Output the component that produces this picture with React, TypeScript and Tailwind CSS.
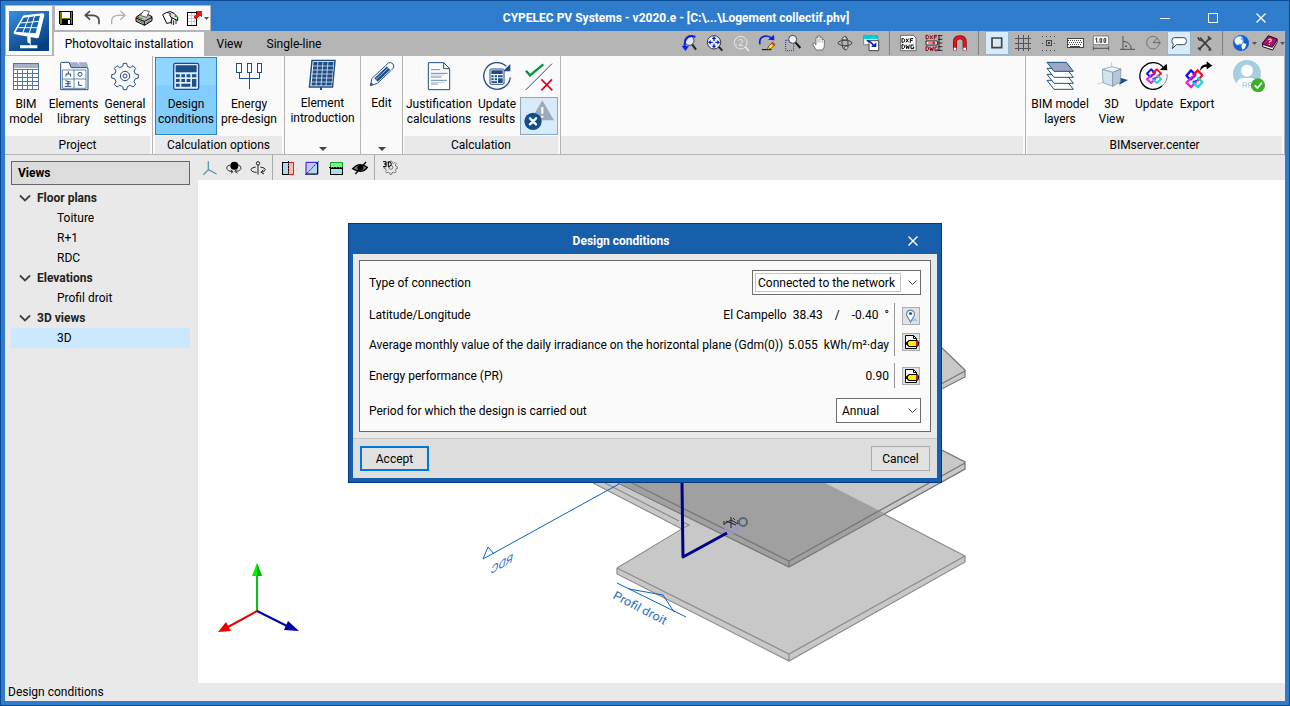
import React from "react";

type GlyphProps = { box: string; w?: number; h?: number; crisp?: boolean; className?: string; children: React.ReactNode };

function Glyph({ box, w = 20, h = 20, crisp, className, children }: GlyphProps) {
  return (
    <svg
      aria-hidden="true"
      viewBox={box}
      width={w}
      height={h}
      shapeRendering={crisp ? "crispEdges" : undefined}
      className={`block shrink-0 ${className ?? ""}`}
      fill="none"
    >
      {children}
    </svg>
  );
}

const NAVY = "#1f4e86";

/* ---------- Quick access ---------- */

const quickIcons: { name: string; icon: React.ReactNode }[] = [
  {
    name: "Save",
    icon: (
      <Glyph box="168 24 60 60" crisp>
        <path d="M177 33h42v42h-39l-3-3z" fill="#000" />
        <path d="M180 36h6v18h-6zM213 36h3v33h-3z" fill="#7f7f00" />
        <path d="M180 54h36v18h-36z" fill="#7f7f00" />
        <path d="M186 36h24v18h-24z" fill="#fff" />
        <path d="M186 57h27v18h-27z" fill="#000" />
        <path d="M204 60h6v12h-6z" fill="#fff" />
      </Glyph>
    ),
  },
  {
    name: "Undo",
    icon: (
      <Glyph box="246 24 60 60">
        <path d="M270 33L256 46L270 59M257 46H280Q297 48 297 62V73" stroke="#4a4a4a" strokeWidth="5" />
      </Glyph>
    ),
  },
  {
    name: "Redo",
    icon: (
      <Glyph box="324 24 60 60">
        <path d="M361 33L375 46L361 59M374 46H352Q335 48 335 62V73" stroke="#b0b0b0" strokeWidth="4" />
      </Glyph>
    ),
  },
  {
    name: "Print",
    icon: (
      <Glyph box="402 24 60 60">
        <path d="M408 52L430 36L456 50V62L434 76L408 64Z" fill="#b9b9b9" stroke="#000" strokeWidth="3" />
        <path d="M421 46L432 31L448 34L440 52Z" fill="#fff" stroke="#222" strokeWidth="2" />
        <path d="M408 54L433 64L456 52M433 64V75" stroke="#000" strokeWidth="3" />
        <path d="M412 60L430 68M438 70L452 61" stroke="#666" strokeWidth="3" />
        <path d="M420 54h6v5h-6z" fill="#00c000" />
        <path d="M413 50h5v4h-5z" fill="#e00000" />
      </Glyph>
    ),
  },
  {
    name: "Plot",
    icon: (
      <Glyph box="480 24 60 60">
        <path d="M488 44L500 37L520 42L512 68L500 70Z" fill="#fff" stroke="#000" strokeWidth="3" />
        <path d="M502 37Q510 31 522 40L533 52V62L513 52Q506 44 512 40" fill="#e4e4e4" stroke="#000" strokeWidth="3" />
        <path d="M515 58V73M521 61V75M528 60V72" stroke="#222" strokeWidth="3" />
        <path d="M524 47h6v4h-6z" fill="#00b000" />
      </Glyph>
    ),
  },
  {
    name: "Export list",
    icon: (
      <Glyph box="558 24 60 60" crisp>
        <path d="M563 36h27v39h-27z" fill="#fff" stroke="#000" strokeWidth="3" />
        <path d="M564 45h24M564 54h24M564 63h24M573 38v36M582 38v36" stroke="#bbb" strokeWidth="2" />
        <path d="M586 33h20v20l-6-6-12 12-7-7 12-12z" fill="#f01010" />
      </Glyph>
    ),
  },
];

/* ---------- Ribbon ---------- */

const BimModel = (
  <Glyph box="30 180 96 96" w={32} h={32} crisp>
    <path d="M40 191h76v77h-76z" fill="#fff" stroke="#5476a3" strokeWidth="3" />
    <path d="M42 193h72v12h-72z" fill="#a5b1cb" />
    <path d="M40 207h76M40 219h76M40 231h76M40 243h76M40 255h76M52 207v60M67 207v60M82 207v60M97 207v60" stroke="#5476a3" strokeWidth="3" />
  </Glyph>
);

const Library = (
  <Glyph box="174 180 96 96" w={32} h={32}>
    <path d="M208 187h24l8 10v9h-28zM236 187h24l4 10v9h-20z" fill="#a2afc9" />
    <path d="M182 269V190q0-3 3-3h22l7 16h46q4 0 4 4v62z" fill="#fff" stroke={NAVY} strokeWidth="3" />
    <path d="M187 210h71v55h-71zM222 210v55M187 237h71" stroke={NAVY} strokeWidth="2" />
    <path d="M205 214v8M198 230v-8h14v8M236 244v12h10M196 242l16 4M204 244v14M196 251h16M194 259h20" stroke={NAVY} strokeWidth="3" />
    <circle cx="240" cy="223" r="6" stroke={NAVY} strokeWidth="3" />
  </Glyph>
);

const gearPath =
  "M370 191h10l2 9 9 4 8-6 8 8-5 8 4 9 9 2v10l-9 2-4 9 5 8-8 8-8-5-9 4-2 9h-10l-2-9-9-4-8 5-8-8 5-8-4-9-9-2v-10l9-2 4-9-5-8 8-8 8 6 9-4z";

const Settings = (
  <Glyph box="327 180 96 96" w={32} h={32}>
    <path d={gearPath} transform="translate(0 -1)" stroke={NAVY} strokeWidth="3" strokeLinejoin="round" />
    <circle cx="375" cy="228" r="14" stroke={NAVY} strokeWidth="3" />
    <circle cx="375" cy="228" r="6" stroke={NAVY} strokeWidth="3" />
  </Glyph>
);

const Calculator = (
  <Glyph box="510 180 96 96" w={32} h={32}>
    <rect x="521" y="190" width="75" height="78" rx="5" fill="#d7ecfb" stroke={NAVY} strokeWidth="4" />
    <path d="M527 196h63v21h-63zM528 223h11v9h-11zM544 223h11v9h-11zM560 223h11v9h-11zM576 223h13v9h-13zM528 237h11v9h-11zM544 237h11v9h-11zM560 237h11v9h-11zM576 237h13v23h-13zM528 251h11v9h-11zM544 251h27v9h-27z" fill={NAVY} />
  </Glyph>
);

const Energy = (
  <Glyph box="699 180 96 96" w={32} h={32} crisp>
    <path d="M710 189h14v27h-14zM741 189h14v27h-14zM771 189h14v27h-14zM717 217v17h61v-17M748 217v50" stroke={NAVY} strokeWidth="3" />
  </Glyph>
);

const Panel = (
  <Glyph box="0 0 32 32" w={32} h={32}>
    <path d="M5 1.500h23l-2.500 26.500h-23z" fill="#fff" stroke={NAVY} strokeWidth="1.500" />
    <path d="M6.500 3h20l-2 23.500h-20z" fill={NAVY} />
    <path d="M5 7h22M5 11h22M4 15h22M4 19h22M4 23h22M11 2l-2 25M16 2l-2 25M21 2l-2 25" stroke="#d9e4f1" strokeWidth=".8" />
    <path d="M14 28v3" stroke={NAVY} strokeWidth="2" />
  </Glyph>
);

const Pencil = (
  <Glyph box="105 30 96 96" w={32} h={32}>
    <path d="M118 110L123 88L172 42Q180 38 186 45Q191 51 187 58L139 103Z" fill="#fff" stroke={NAVY} strokeWidth="3" />
    <path d="M130 88L168 52L178 62L140 98Z" fill={NAVY} />
    <path d="M134 92L172 57M164 48L182 66M123 88L139 103" stroke="#e6eef7" strokeWidth="2" />
    <path d="M117 111L121 101L127 106Z" fill={NAVY} />
  </Glyph>
);

const Doc = (
  <Glyph box="279 30 96 96" w={32} h={32}>
    <path d="M295 38h46l18 18v63h-64zM341 38v18h18" fill="#fff" stroke={NAVY} strokeWidth="3" />
    <path d="M303 59h27M303 70h50M303 81h32M303 91h48M303 102h20" stroke={NAVY} strokeWidth="2" />
    <path d="M303 75h40M303 97h42" stroke="#9fb3cf" strokeWidth="2" />
  </Glyph>
);

const CalcUpdate = (
  <Glyph box="453 30 96 96" w={32} h={32}>
    <path d="M541 82A40 40 0 1 1 529 49" stroke={NAVY} strokeWidth="4" />
    <path d="M519 64h22v-22z" fill={NAVY} />
    <rect x="480" y="57" width="42" height="46" rx="4" fill="#fff" stroke={NAVY} strokeWidth="3" />
    <path d="M484 61h34v11h-34zM484 76h7v6h-7zM494 76h7v6h-7zM504 76h14v6h-14zM484 85h7v6h-7zM494 85h7v6h-7zM504 85h14v14h-14zM484 94h17v5h-17z" fill={NAVY} />
  </Glyph>
);

const CheckCross = (
  <Glyph box="570 30 114 96" w={38} h={32}>
    <path d="M587 120L666 41" stroke={NAVY} strokeWidth="3" />
    <path d="M588 62L600 76L640 43" stroke="#00963c" strokeWidth="7" />
    <path d="M634 88L667 121M666 88L634 121" stroke="#e2001e" strokeWidth="5" />
  </Glyph>
);

const Warning = (
  <Glyph box="570 142 114 114" w={38} h={38}>
    <path d="M637 152L672 212H602Z" fill="#9da9bf" />
    <path d="M637 172V192M637 198V204" stroke="#fff" strokeWidth="6" />
    <circle cx="609" cy="215" r="26" fill="#134f86" />
    <path d="M600 206L618 224M618 206L600 224" stroke="#fff" strokeWidth="7" strokeLinecap="round" />
  </Glyph>
);

const Layers = (
  <Glyph box="222 180 96 96" w={32} h={32}>
    <path d="M231 241h58l21 27h-58z" fill="#fff" stroke={NAVY} strokeWidth="3" />
    <path d="M231 223h58l21 27h-58z" fill="#fff" stroke={NAVY} strokeWidth="3" />
    <path d="M231 205h58l21 27h-58z" fill="#fff" stroke={NAVY} strokeWidth="3" />
    <path d="M231 187h58l21 27h-58z" fill="#9aa9c3" stroke={NAVY} strokeWidth="3" />
  </Glyph>
);

const Cube = (
  <Glyph box="378 180 96 96" w={32} h={32}>
    <path d="M425 186v30M382 252l30-8M448 256l8 2" stroke="#a9b9c6" strokeWidth="2" />
    <path d="M450 233L474 240L448 254Z" fill="#1f4e86" />
    <path d="M397 208L425 200L453 207L428 217Z" fill="#eef4f8" stroke="#6f8da5" strokeWidth="2" />
    <path d="M397 208L428 217V259L399 248Z" fill="#d4e2ec" stroke="#6f8da5" strokeWidth="2" />
    <path d="M428 217L453 207L451 246L428 259Z" fill="#b4c7d6" stroke="#6f8da5" strokeWidth="2" />
  </Glyph>
);

/* Four interlocked loops, one per corner. */
function Knot({ x, y }: { x: number; y: number }) {
  return (
    <g transform={`translate(${x} ${y})`} strokeWidth="6" strokeLinejoin="round">
      <path d="M-10 4L-21 -7L-9 -20L4 -8" stroke="#0a16f0" />
      <path d="M-4 -8L9 -20L21 -8L8 5" stroke="#f0102a" />
      <path d="M5 8L-9 21L-21 10L-7 -3L4 -8" stroke="#f418e8" />
      <path d="M8 -3L21 9L9 21L-5 8" stroke="#12d8e8" />
      <path d="M-10 4L4 -8M-4 8L8 5" stroke="#4b28d8" strokeWidth="4" />
    </g>
  );
}

const ServerUpdate = (
  <Glyph box="504 180 96 96" w={32} h={32}>
    <path d="M576 258A40 40 0 1 1 580 202" stroke="#000" strokeWidth="4" />
    <path d="M591 222Q594 244 576 258" stroke="#888" strokeWidth="3" />
    <path d="M569 210L592 211L590 191Z" fill="#000" />
    <Knot x={552} y={228} />
  </Glyph>
);

const ServerExport = (
  <Glyph box="633 180 96 96" w={32} h={32}>
    <g transform="translate(-94 -50) scale(1.14 1.22)">
      <Knot x={673} y={234} />
    </g>
    <path d="M690 214Q690 193 710 193V184L727 197L710 208V200Q696 200 690 214Z" fill="#000" />
  </Glyph>
);

const Avatar = (
  <Glyph box="786 177 108 108" w={36} h={36}>
    <circle cx="834" cy="222" r="42" fill="#a5cfde" />
    <circle cx="834" cy="212" r="18" fill="#fff" />
    <path d="M803 250Q808 234 824 234H844Q860 234 865 250Q852 264 834 264Q816 264 803 250Z" fill="#fff" />
    <path d="M822 262v-10q0-5 5-5t5 5v10M822 256h10M838 262v-10q0-5 5-5t5 5v10M838 256h10" stroke="#a5cfde" strokeWidth="3" />
    <circle cx="867" cy="256" r="21" fill="#3fae2a" />
    <path d="M857 256L865 264L879 248" stroke="#fff" strokeWidth="5" />
  </Glyph>
);

type Item = { label: string[]; icon: React.ReactNode; width: string; active?: boolean };

function RibbonButton({ item }: { item: Item }) {
  return (
    <button
      type="button"
      className={`flex h-[78px] shrink-0 flex-col items-center border pt-0.5 ${item.width} ${
        item.active ? "border-[#2e86bf] bg-linear-to-b from-[#8fd6ff] from-35% to-[#82cdff] to-35%" : "border-transparent"
      }`}
    >
      <span className="flex h-8 items-center justify-center">{item.icon}</span>
      <span className="mt-[5px] flex flex-col items-center whitespace-nowrap leading-[15px]">
        {item.label.map((line) => (
          <span key={line}>{line}</span>
        ))}
      </span>
    </button>
  );
}

function RibbonGroup({ title, items, className, children }: { title: string; items: Item[]; className?: string; children?: React.ReactNode }) {
  return (
    <section className={`flex shrink-0 flex-col border-r border-[#b4b4b4] ${className ?? ""}`}>
      <div className="flex flex-1 items-start pt-px">
        {items.map((item) => (
          <RibbonButton key={item.label.join(" ")} item={item} />
        ))}
        {children}
      </div>
      <h2 className="mr-0.5 flex h-[18px] items-center justify-center bg-[#e9e9e9]">{title}</h2>
    </section>
  );
}

function CompactGroup({ item, className }: { item: Item; className: string }) {
  return (
    <section className={`flex shrink-0 flex-col items-center justify-between border-r border-[#b4b4b4] ${className}`}>
      <RibbonButton item={item} />
      <Glyph box="0 0 8 5" w={8} h={5} className="mb-0.5">
        <path d="M0 0h8l-4 4z" fill="#444" />
      </Glyph>
    </section>
  );
}

const projectItems: Item[] = [
  { label: ["BIM", "model"], icon: BimModel, width: "w-[42px]" },
  { label: ["Elements", "library"], icon: Library, width: "w-[53px]" },
  { label: ["General", "settings"], icon: Settings, width: "w-[50px]" },
];
const optionItems: Item[] = [
  { label: ["Design", "conditions"], icon: Calculator, width: "w-[62px]", active: true },
  { label: ["Energy", "pre-design"], icon: Energy, width: "w-16" },
];
const calculationItems: Item[] = [
  { label: ["Justification", "calculations"], icon: Doc, width: "w-[70px]" },
  { label: ["Update", "results"], icon: CalcUpdate, width: "w-[46px]" },
];
const serverItems: Item[] = [
  { label: ["BIM model", "layers"], icon: Layers, width: "w-[66px]" },
  { label: ["3D", "View"], icon: Cube, width: "w-[37px]" },
  { label: ["Update"], icon: ServerUpdate, width: "w-12" },
  { label: ["Export"], icon: ServerExport, width: "w-[38px]" },
];

/* ---------- View tools ---------- */

const viewTools: { name: string; icon: React.ReactNode }[] = [
  {
    name: "Previous zoom",
    icon: (
      <Glyph box="27 99 60 60">
        <circle cx="58" cy="122" r="14" fill="#dfe8f4" stroke="#444" strokeWidth="3" />
        <path d="M67 134L78 149" stroke="#222" strokeWidth="6" />
        <path d="M76 111Q58 102 48 118Q42 128 45 142" stroke="#0a20e0" strokeWidth="6" />
        <path d="M35 137L57 139L46 153Z" fill="#0a20e0" />
      </Glyph>
    ),
  },
  {
    name: "Zoom all",
    icon: (
      <Glyph box="105 99 60 60">
        <circle cx="132" cy="127" r="20" fill="#eef3fa" stroke="#333" strokeWidth="3" />
        <path d="M146 140L157 152" stroke="#222" strokeWidth="6" />
        <path d="M132 115v8M132 131v8M120 127h8M136 127h8" stroke="#0a20e0" strokeWidth="4" />
        <path d="M132 109l7 8h-14zM132 145l7-8h-14zM114 127l8-7v14zM150 127l-8-7v14z" fill="#0a20e0" />
      </Glyph>
    ),
  },
  {
    name: "Zoom scale",
    icon: (
      <Glyph box="183 99 60 60">
        <circle cx="212" cy="128" r="19" stroke="#e8e8e8" strokeWidth="3" />
        <path d="M226 141L237 153" stroke="#e8e8e8" strokeWidth="5" />
        <path d="M206 121Q213 115 218 122Q217 129 207 136H219M199 134h3" stroke="#e8e8e8" strokeWidth="3" />
      </Glyph>
    ),
  },
  {
    name: "Redraw",
    icon: (
      <Glyph box="261 99 60 60">
        <path d="M270 133Q266 114 282 109Q296 105 305 116" stroke="#0a20e0" strokeWidth="5" />
        <path d="M294 119L313 121L312 104Z" fill="#0a20e0" />
        <path d="M276 149h28" stroke="#000" strokeWidth="3" />
        <path d="M292 149L296 138L308 127L315 134L303 146Z" fill="#ffe21a" stroke="#222" strokeWidth="2" />
        <path d="M308 127L315 134L311 138L304 131Z" fill="#e03030" />
      </Glyph>
    ),
  },
  {
    name: "Zoom window",
    icon: (
      <Glyph box="339 99 60 60">
        <path d="M347 121h24v31h-24z" stroke="#1a30e0" strokeWidth="3" strokeDasharray="3 3" />
        <circle cx="368" cy="118" r="12" fill="#eef3fa" stroke="#444" strokeWidth="3" />
        <path d="M377 128L391 144" stroke="#111" strokeWidth="6" />
      </Glyph>
    ),
  },
  {
    name: "Pan",
    icon: (
      <Glyph box="417 99 60 60">
        <path d="M438 150L429 133Q428 127 433 129L438 134V113q3-4 6 0v-5q3-4 6 0v4q3-3 6 1v6q3-3 7 1v14Q463 144 458 150Z" fill="#fff" stroke="#444" strokeWidth="2" />
        <path d="M444 115v13M450 112v16M457 117v11" stroke="#888" strokeWidth="2" />
      </Glyph>
    ),
  },
  {
    name: "Orbit",
    icon: (
      <Glyph box="495 99 60 60">
        <ellipse cx="525" cy="129" rx="21" ry="8" stroke="#444" strokeWidth="3" />
        <ellipse cx="525" cy="129" rx="9" ry="20" stroke="#444" strokeWidth="3" />
        <path d="M514 117l12-9 4 12zM536 139l-8 12-6-10z" fill="#ddd" stroke="#444" strokeWidth="2" />
      </Glyph>
    ),
  },
  {
    name: "Window view",
    icon: (
      <Glyph box="573 99 60 60">
        <path d="M581 107h42v27h-42z" fill="#fff" stroke="#555" strokeWidth="2" />
        <path d="M582 107h40v10h-40z" fill="#00cfe0" />
        <path d="M597 122h29v30h-29z" fill="#fff" stroke="#444" strokeWidth="3" />
        <path d="M590 122Q600 122 612 138" stroke="#0a20c0" strokeWidth="5" />
        <path d="M603 141h16v-14z" fill="#0a20c0" />
      </Glyph>
    ),
  },
];

const dxfTools: { name: string; icon: React.ReactNode }[] = [
  {
    name: "DXF-DWG templates",
    icon: (
      <Glyph box="684 99 60 60">
        <path d="M692 106h38l8 8v38h-46z" fill="#fff" stroke="#333" strokeWidth="2" />
        <path d="M696 116v11h4l4-4v-4l-4-3zM708 116l8 11M716 116l-8 11M721 128v-12h9M721 121h7M696 134v12h4l4-4v-4l-4-4zM708 134l2 12 3-7 3 7 2-12M731 135h-8v11h8v-5h-3" stroke="#000" strokeWidth="3" />
      </Glyph>
    ),
  },
  {
    name: "Template layers",
    icon: (
      <Glyph box="762 99 60 60">
        <path d="M768 106v11h4l4-4v-4l-4-3zM780 106l8 11M788 106l-8 11M793 118v-12h8M793 111h7M768 140v12h4l4-4v-4l-4-4zM780 140l2 12 3-7 3 7 2-12M802 141h-7v11h7v-5" stroke="#8c0010" strokeWidth="3" />
        <path d="M804 107h13M804 118h13M804 129h13M804 140h13M804 151h13M807 107v45" stroke="#222" strokeWidth="3" />
        <path d="M768 123h34v12h-34z" fill="#fff" stroke="#222" strokeWidth="3" />
        <path d="M774 129h16" stroke="#e01020" strokeWidth="3" />
        <path d="M788 123l10 6-10 6z" fill="#e01020" />
      </Glyph>
    ),
  },
  {
    name: "Object snaps",
    icon: (
      <Glyph box="840 99 60 60">
        <path d="M855 151V126Q855 112 870 112Q884 112 884 126V151" stroke="#7a0000" strokeWidth="12" />
        <path d="M855 144V126Q855 112 870 112Q884 112 884 126V144" stroke="#e01818" strokeWidth="8" />
        <path d="M851 143h8v7h-8zM880 143h8v7h-8z" fill="#fff" />
      </Glyph>
    ),
  },
];

const G = "#444";
const assistTools: { name: string; icon: React.ReactNode; active?: boolean }[] = [
  { name: "Frame", active: true, icon: <Glyph box="51 99 60 60"><path d="M66 114h29v29h-29z" stroke={G} strokeWidth="5" /></Glyph> },
  { name: "Grid", icon: <Glyph box="129 99 60 60" crisp><path d="M144 105v48M159 105v48M174 105v48M135 114h48M135 129h48M135 144h48" stroke="#555" strokeWidth="3" /></Glyph> },
  {
    name: "Snap to grid",
    icon: (
      <Glyph box="207 99 60 60" crisp>
        <path d="M228 120h17v17h-17z" stroke={G} strokeWidth="3" />
        <path d="M216 109h42M216 150h42M216 129h9M252 129h9" stroke={G} strokeWidth="3" strokeDasharray="3 9" />
        <path d="M235 127h4v4h-4z" fill={G} />
      </Glyph>
    ),
  },
  {
    name: "Keyboard entry",
    icon: (
      <Glyph box="285 99 60 60" crisp>
        <path d="M291 114h48v29h-48z" fill="#fff" stroke={G} strokeWidth="3" />
        <path d="M295 120h42M297 127h40M295 133h42" stroke={G} strokeWidth="3" strokeDasharray="3 3" />
        <path d="M300 139h30" stroke={G} strokeWidth="3" />
      </Glyph>
    ),
  },
  {
    name: "Dimensions",
    icon: (
      <Glyph box="363 99 60 60">
        <path d="M370 108h46v26h-46z" fill="#fff" stroke="#555" strokeWidth="2" />
        <path d="M376 117l4-3v14M384 125v3M390 116h5v11h-5zM402 116h5v11h-5z" stroke="#333" strokeWidth="3" />
        <path d="M370 145h46M370 139v12M416 139v12" stroke="#555" strokeWidth="3" />
      </Glyph>
    ),
  },
  { name: "Ortho", icon: <Glyph box="441 99 60 60"><path d="M450 148h45M459 108v40M459 124Q483 126 484 148" stroke="#555" strokeWidth="3" /><circle cx="468" cy="139" r="3" fill="#555" /></Glyph> },
  { name: "Polar", icon: <Glyph box="519 99 60 60"><circle cx="549" cy="128" r="19" stroke="#777" strokeWidth="3" /><path d="M549 128h23M549 128l14-14" stroke="#666" strokeWidth="3" /></Glyph> },
  { name: "Comments", active: true, icon: <Glyph box="597 99 60 60"><path d="M613 113h28q8 0 8 8v4q0 9-8 9h-22l-12 12 3-14q-4-3-4-8v-3q0-8 7-8z" fill="#fff" stroke={G} strokeWidth="3" /></Glyph> },
  {
    name: "Configuration",
    icon: (
      <Glyph box="675 99 60 60">
        <path d="M690 113L722 148M722 112L687 148" stroke={G} strokeWidth="6" />
        <path d="M685 111q-1 11 11 10M716 108q-3 10 8 9M715 150h9M684 143l8 8" stroke={G} strokeWidth="5" />
      </Glyph>
    ),
  },
];

const helpTools: { name: string; icon: React.ReactNode }[] = [
  {
    name: "Language",
    icon: (
      <Glyph box="783 99 60 60">
        <circle cx="810" cy="129" r="24" fill="#1560d0" />
        <circle cx="804" cy="122" r="14" fill="#6db4f6" />
        <path d="M791 120q8-13 22-10l-5 8 8 5-4 8-8-1-5 6-7-8zM816 129l10 3-4 13-8 4-3-10z" fill="#fff" />
      </Glyph>
    ),
  },
  {
    name: "Help",
    icon: (
      <Glyph box="864 99 60 60">
        <path d="M871 130L889 107L916 117L902 143L873 138Z" fill="#a5107e" stroke="#300024" strokeWidth="3" />
        <path d="M872 133L901 142L915 120V127L902 150L872 140Z" fill="#fff" stroke="#300024" strokeWidth="3" />
        <path d="M889 119q8-4 9 2-1 4-5 4v3M892 132v3" stroke="#ffe600" strokeWidth="4" />
      </Glyph>
    ),
  },
];

function SmallCaret({ className }: { className?: string }) {
  return (
    <Glyph box="0 0 5 3" w={5} h={3} className={className}>
      <path d="M0 0h5l-2.500 3z" fill="#555" />
    </Glyph>
  );
}

function ToolDivider({ className }: { className: string }) {
  return <span className={`h-6 w-px bg-[#808080] ${className}`} />;
}

/* ---------- Scene tools ---------- */

const sceneTools: { name: string; icon: React.ReactNode }[][] = [
  [
    { name: "Isometric", icon: <Glyph box="600 24 60 60"><path d="M625 34V59L610 74M625 59L650 72" stroke="#5f97ac" strokeWidth="4" /></Glyph> },
    {
      name: "Orbit view",
      icon: (
        <Glyph box="672 24 60 60">
          <circle cx="703" cy="47" r="12" fill="#000" />
          <path d="M690 45Q680 47 680 54Q681 63 697 65M714 45Q725 48 723 56Q719 65 706 64" stroke="#333" strokeWidth="3" />
          <path d="M712 57l-8 7 9 6M692 60l7 5-6 5" stroke="#333" strokeWidth="3" />
        </Glyph>
      ),
    },
    {
      name: "Turn view",
      icon: (
        <Glyph box="744 24 60 60">
          <circle cx="774" cy="40" r="5" stroke="#222" strokeWidth="3" />
          <path d="M774 45V74M767 51Q753 53 753 59Q755 67 770 67M781 51Q796 53 796 59Q794 66 783 67M790 59l-7 8 9 5" stroke="#222" strokeWidth="3" />
        </Glyph>
      ),
    },
  ],
  [
    {
      name: "Section X",
      icon: (
        <Glyph box="834 24 60 60" crisp>
          <path d="M847 37h17v35h-17z" fill="#aedbe8" stroke="#000" strokeWidth="3" />
          <path d="M866 37h15v35h-15z" fill="#ffb9b9" stroke="#e81c24" strokeWidth="3" />
          <path d="M865 33v42" stroke="#000" strokeWidth="3" strokeDasharray="5 3" />
        </Glyph>
      ),
    },
    {
      name: "Section Y",
      icon: (
        <Glyph box="906 24 60 60">
          <path d="M918 37h35v35h-35z" fill="#c9c4ff" stroke="#1818e8" strokeWidth="3" />
          <path d="M953 37v35h-35z" fill="#aedbe8" />
          <path d="M953 37v35h-35" stroke="#000" strokeWidth="3" />
          <path d="M916 75L956 34" stroke="#000" strokeWidth="3" strokeDasharray="5 4" />
        </Glyph>
      ),
    },
    {
      name: "Section Z",
      icon: (
        <Glyph box="978 24 60 60" crisp>
          <path d="M990 37h36v15h-36z" fill="#7df58c" stroke="#10a828" strokeWidth="3" />
          <path d="M990 54h36v18h-36z" fill="#aedbe8" stroke="#000" strokeWidth="3" />
          <path d="M987 53h42" stroke="#000" strokeWidth="3" strokeDasharray="5 3" />
        </Glyph>
      ),
    },
    {
      name: "Hide",
      icon: (
        <Glyph box="1050 24 60 60">
          <path d="M1058 56Q1078 34 1102 52Q1086 74 1058 56Z" fill="#777" stroke="#000" strokeWidth="4" />
          <circle cx="1081" cy="53" r="9" fill="#000" />
          <path d="M1066 72L1098 36" stroke="#000" strokeWidth="4" />
        </Glyph>
      ),
    },
  ],
  [
    {
      name: "3D options",
      icon: (
        <Glyph box="1140 24 60 60">
          <g transform="translate(985 -62) scale(.5)">
            <path d={gearPath} stroke="#777" strokeWidth="6" />
            <circle cx="375" cy="228" r="12" stroke="#777" strokeWidth="6" />
          </g>
          <path d="M1149 35h9v7h-6M1158 42v8h-9M1165 35v15h4q10-7 0-15z" stroke="#000" strokeWidth="3" />
        </Glyph>
      ),
    },
  ],
];

/* ---------- Sidebar ---------- */

const tree = [
  { title: "Floor plans", views: ["Toiture", "R+1", "RDC"] },
  { title: "Elevations", views: ["Profil droit"] },
  { title: "3D views", views: ["3D"] },
];

function Sidebar() {
  return (
    <aside className="w-[193px] shrink-0 bg-[#e9e9e9] px-1.5 pt-1.5">
      <div className="mr-0.5">
        <h2 className="flex h-6 items-center border border-[#666] bg-[#dcdcdc] px-1.5 font-bold">Views</h2>
        <ul className="mt-[3px]">
          {tree.map((node) => (
            <li key={node.title}>
              <button type="button" className="flex h-5 w-full items-center gap-1.5 pl-2 font-bold text-[#222]">
                <Glyph box="0 0 12 8" w={12} h={8}>
                  <path d="M1 1.500L6 6.500L11 1.500" stroke="#444" strokeWidth="1.800" />
                </Glyph>
                {node.title}
              </button>
              <ul>
                {node.views.map((view) => (
                  <li key={view}>
                    <button type="button" className={`flex h-5 w-full items-center pl-[46px] ${view === "3D" ? "bg-[#cce8ff]" : ""}`}>
                      {view}
                    </button>
                  </li>
                ))}
              </ul>
            </li>
          ))}
        </ul>
      </div>
    </aside>
  );
}

/* ---------- 3D scene ---------- */

function Scene() {
  return (
    <svg role="img" aria-label="3D view of the building" viewBox="198 180 1087 503" className="block h-full w-full" fill="none">
      <path d="M560 466L682 529L689 526L617 568V574L789 661L965 562V556L780 460Z" fill="#c8c8c8" />
      <path d="M593 483L682 529M605 483L679 521M682 529L689 525L683 522M682 529L617 568M617 568L789 654L965 556L820 481M617 568V574L789 661L965 562V556M789 654V661" stroke="#8c8c8c" strokeWidth="1.200" />
      <path d="M600 473L789 567L965 469V462L930 444Z" fill="#c8c8c8" />
      <path d="M600 473L789 567L884 513L825 483L780 460Z" fill="#a0a0a0" />
      <path d="M618 483L789 567L965 469V462L930 444M632 483L789 561L965 463M789 561V567" stroke="#777" strokeWidth="1.300" />
      <path d="M930 337L942 348L965 370V377L930 395Z" fill="#c8c8c8" />
      <path d="M930 337L942 348L965 370V377L930 395M965 371L930 390" stroke="#777" strokeWidth="1.200" />
      <path d="M724 525L731 521L739 525V531L731 535L724 531Z" fill="#9a9ab8" fillOpacity=".75" />
      <path d="M731 517V528M726 521L736 525M724 524L731 520L738 524M724 521v4M738 520v4M733 518l2 2" stroke="#222" strokeWidth="1" />
      <ellipse cx="743" cy="522" rx="4" ry="4" fill="#9aa3ad" stroke="#5b6672" strokeWidth="2" />
      <path d="M682 483L683 557L727 533" stroke="#00008b" strokeWidth="3" strokeLinejoin="round" />
      <g stroke="#0a62c8" strokeWidth="1">
        <path d="M619 484L483 559L488 547L494 554" />
        <path d="M617 583L686 617M629 589L663 595L674 612" />
      </g>
      <g fill="#2a6fc4" fontSize="13">
        <text transform="matrix(-.87 .5 -.2 .95 512 562)">RDC</text>
        <text transform="matrix(.87 .45 -.45 .8 612 598)">Profil droit</text>
      </g>
      <path d="M257 611V574" stroke="#00c810" strokeWidth="2" />
      <path d="M257 563L262 576H252Z" fill="#00f000" />
      <path d="M257 563L262 576H257Z" fill="#00b410" />
      <path d="M257 611L228 627" stroke="#e80000" strokeWidth="2" />
      <path d="M218 632L226 622L231 631Z" fill="#f00000" />
      <path d="M257 611L289 627" stroke="#0000b0" strokeWidth="2" />
      <path d="M299 631L288 621L284 630Z" fill="#0000a8" />
    </svg>
  );
}

/* ---------- Dialog ---------- */

function Dropdown({ id, value, focused, className }: { id: string; value: string; focused?: boolean; className: string }) {
  return (
    <div className={`relative h-[25px] ${className}`}>
      <select id={id} defaultValue={value} className="h-full w-full appearance-none border border-[#6e6e6e] bg-white pt-px pr-5 pl-[5px] outline-none">
        <option>{value}</option>
      </select>
      {focused && <span className="pointer-events-none absolute top-[3px] right-5 bottom-[3px] left-[3px] border border-[#c4c4c4]" />}
      <Glyph box="0 0 9 6" w={9} h={6} className="pointer-events-none absolute top-2.5 right-1">
        <path d="M.5 .5L4.500 4.500L8.500 .5" stroke="#444" strokeWidth="1" />
      </Glyph>
    </div>
  );
}

function SquareButton({ label, children }: { label: string; children: React.ReactNode }) {
  return (
    <button type="button" aria-label={label} className="flex size-[18px] items-center justify-center border border-[#adadad] bg-[#e1e1e1]">
      {children}
    </button>
  );
}

const Pin = (
  <Glyph box="0 0 16 16" w={16} h={16}>
    <path d="M8 13h7l-3-3" fill="#a9c4de" />
    <path d="M7.500 14L4 8A4 4 0 1 1 11 8Z" fill="#fff" stroke="#5c87b2" strokeWidth="1.200" />
    <circle cx="7.500" cy="5.500" r="1.600" fill="#1f5fa6" />
  </Glyph>
);

const EditPage = (
  <Glyph box="0 0 16 16" w={16} h={16}>
    <path d="M2.500 1.500h8l3 3v10h-11z" fill="#fff" stroke="#000" strokeWidth="1" />
    <path d="M10.500 1.500v3h3" stroke="#000" />
    <path d="M3 9.500L6 6.500H13Q15.500 6.500 15.500 9.500T13 12.500H6Z" fill="#ffee00" stroke="#000" strokeWidth="1.200" />
    <path d="M13 7h1.500q1 2.500 0 5H13z" fill="#e01010" />
    <path d="M2.500 9.500L5 8v3z" fill="#000" />
  </Glyph>
);

function DesignDialog() {
  return (
    <div className="fixed inset-0 flex items-center justify-center">
      <div role="dialog" aria-labelledby="dialog-title" className="flex w-[594px] flex-col border border-[#003a80] bg-[#185fab] px-1 pb-1">
        <div className="flex h-[30px] items-center pt-1 text-white">
          <h1 id="dialog-title" className="flex-1 text-center font-bold">Design conditions</h1>
          <button type="button" aria-label="Close" className="flex w-12 justify-center">
            <Glyph box="0 0 10 10" w={10} h={10}>
              <path d="M.5 .5L9.500 9.500M9.500 .5L.5 9.500" stroke="#fff" strokeWidth="1.400" />
            </Glyph>
          </button>
        </div>
        <div className="bg-[#e9e9e9] p-1.5">
          <div className="flex flex-col border border-[#666] bg-[#fafafa] px-[9px] pt-[9px] pb-2">
            <div className="flex h-[25px] items-center justify-between">
              <label htmlFor="connection">Type of connection</label>
              <Dropdown id="connection" value="Connected to the network" focused className="w-[169px]" />
            </div>
            <div className="mt-2 flex h-[53px]">
              <div className="flex flex-1 flex-col justify-between border-r border-[#999] pr-[5px] pb-px">
                <div className="flex h-6 items-center justify-between">
                  <span>Latitude/Longitude</span>
                  <span className="flex">
                    <span>El Campello</span>
                    <span className="ml-1.5">38.43</span>
                    <span className="mx-3">/</span>
                    <span>-0.40</span>
                    <span className="ml-1.5">°</span>
                  </span>
                </div>
                <div className="flex h-5 items-center justify-between whitespace-nowrap">
                  <span>Average monthly value of the daily irradiance on the horizontal plane (Gdm(0))</span>
                  <span className="flex gap-1.5">
                    <span>5.055</span>
                    <span>kWh/m²·day</span>
                  </span>
                </div>
              </div>
              <div className="ml-[7px] flex w-[19px] flex-col gap-2 pt-1">
                <SquareButton label="Select location">{Pin}</SquareButton>
                <SquareButton label="Edit irradiance">{EditPage}</SquareButton>
              </div>
            </div>
            <div className="mt-[7px] flex h-[25px]">
              <div className="flex flex-1 items-center justify-between border-r border-[#999] pr-[5px]">
                <span>Energy performance (PR)</span>
                <span>0.90</span>
              </div>
              <div className="ml-[7px] flex w-[19px] items-start pt-1">
                <SquareButton label="Edit performance">{EditPage}</SquareButton>
              </div>
            </div>
            <div className="mt-2.5 flex h-[25px] items-center justify-between">
              <label htmlFor="period">Period for which the design is carried out</label>
              <Dropdown id="period" value="Annual" className="w-[85px]" />
            </div>
          </div>
        </div>
        <div className="flex h-10 items-center justify-between border-t border-[#c4c4c4] bg-[#dedede] px-[7px]">
          <button type="button" className="h-[25px] w-[69px] border-2 border-[#0078d7] bg-[#e1e1e1]">Accept</button>
          <button type="button" className="h-[25px] w-[59px] border border-[#adadad] bg-[#e1e1e1]">Cancel</button>
        </div>
      </div>
    </div>
  );
}

/* ---------- Header ---------- */

function Header() {
  return (
    <header className="flex h-[51px] shrink-0">
      <button type="button" aria-label="Application menu" className="flex w-[49px] items-center justify-center border border-r-2 border-[#b4b4b4] bg-[#fafafa]">
        <Glyph box="27 30 120 120" w={40} h={40}>
          <defs>
            <linearGradient id="logo" x1="0" y1="0" x2="0.6" y2="1">
              <stop offset="0" stopColor="#3a8ee0" />
              <stop offset="1" stopColor="#073f80" />
            </linearGradient>
          </defs>
          <path d="M27 30h120v120h-120z" fill="url(#logo)" />
          <path d="M82 106V124L90 128V133H60V142H112V133H92V108Z" fill="#fff" />
          <path d="M67 48Q68 44 73 43L127 37Q134 37 133 43L117 108Q116 112 110 112L45 100Q40 98 41 93Z" fill="#fff" />
          <path d="M71 50L120 44L107 97L47 92Z" fill="#1763ad" />
          <path d="M87 47L68 96M104 45L87 98M62 66L117 61M55 80L112 80" stroke="#fff" strokeWidth="3" />
        </Glyph>
      </button>
      <div className="flex min-w-0 flex-1 flex-col">
        <div className="flex h-[26px] items-center">
          <div className="flex h-full w-[157px] items-center gap-1.5 border border-[#b4b4b4] bg-[#fafafa] pl-px">
            {quickIcons.map((tool) => (
              <button key={tool.name} type="button" aria-label={tool.name} className="shrink-0">
                {tool.icon}
              </button>
            ))}
            <SmallCaret className="-ml-2" />
          </div>
          <div className="flex-1 text-center font-bold whitespace-nowrap text-white">
            CYPELEC PV Systems - v2020.e - [C:\...\Logement collectif.phv]
          </div>
          <div className="flex">
            <button type="button" aria-label="Minimize" className="flex w-12 justify-center">
              <Glyph box="0 0 10 10" w={10} h={10} crisp><path d="M0 5.500h10" stroke="#fff" /></Glyph>
            </button>
            <button type="button" aria-label="Maximize" className="flex w-12 justify-center">
              <Glyph box="0 0 10 10" w={10} h={10} crisp><path d="M.5 .5h9v9h-9z" stroke="#fff" /></Glyph>
            </button>
            <button type="button" aria-label="Close window" className="flex w-12 justify-center">
              <Glyph box="0 0 10 10" w={10} h={10}><path d="M.5 .5L9.500 9.500M9.500 .5L.5 9.500" stroke="#fff" strokeWidth="1.300" /></Glyph>
            </button>
          </div>
        </div>
        <div className="flex h-[25px] items-center justify-between bg-[#b4b4b4]">
          <nav className="flex h-full pt-px">
            <a href="#photovoltaic" className="flex w-[150px] items-center justify-center bg-[#fafafa]">Photovoltaic installation</a>
            <a href="#view" className="flex w-[51px] items-center justify-center">View</a>
            <a href="#single-line" className="flex w-[78px] items-center justify-center">Single-line</a>
          </nav>
          <div className="flex h-full items-center pb-px">
            {viewTools.map((t) => (
              <button key={t.name} type="button" aria-label={t.name} className="flex w-[26px] justify-center">{t.icon}</button>
            ))}
            <ToolDivider className="mx-[5px]" />
            {dxfTools.map((t) => (
              <button key={t.name} type="button" aria-label={t.name} className="flex w-[26px] justify-center">{t.icon}</button>
            ))}
            <ToolDivider className="mx-[5px]" />
            {assistTools.map((t) => (
              <button
                key={t.name}
                type="button"
                aria-label={t.name}
                className={`mx-px flex h-6 w-6 items-center justify-center border ${t.active ? "border-[#8fb6d3] bg-[#d9ebf9]" : "border-transparent"}`}
              >
                {t.icon}
              </button>
            ))}
            <ToolDivider className="mr-1.5 ml-1" />
            {helpTools.map((t) => (
              <button key={t.name} type="button" aria-label={t.name} className="flex w-7 items-center justify-end">
                {t.icon}
                <SmallCaret />
              </button>
            ))}
          </div>
        </div>
      </div>
    </header>
  );
}

export default function App() {
  return (
    <div className="flex h-screen w-full flex-col overflow-hidden border border-[#0a4a94] bg-[#2f7ccd] p-1 font-['Roboto','Segoe_UI',sans-serif] text-xs leading-4 text-black">
      <Header />
      <div className="flex h-[99px] shrink-0 border-b border-[#b4b4b4] bg-[#fafafa]">
        <RibbonGroup title="Project" items={projectItems} className="w-[148px]" />
        <RibbonGroup title="Calculation options" items={optionItems} className="w-[132px] pl-0.5" />
        <CompactGroup item={{ label: ["Element", "introduction"], icon: Panel, width: "w-[74px]" }} className="w-[76px]" />
        <CompactGroup item={{ label: ["Edit"], icon: Pencil, width: "w-10" }} className="w-[42px]" />
        <RibbonGroup title="Calculation" items={calculationItems} className="w-[158px] pl-px">
          <div className="flex flex-col pt-[3px]">
            <button type="button" aria-label="Check">{CheckCross}</button>
            <button type="button" aria-label="Warnings" className="mt-[5px] flex size-[38px] items-center justify-center border border-[#8aa8c0] bg-[#d9ebf9]">
              {Warning}
            </button>
          </div>
        </RibbonGroup>
        <div className="flex flex-1 flex-col justify-end border-r border-[#b4b4b4]">
          <div className="mr-0.5 h-[18px] bg-[#e9e9e9]" />
        </div>
        <RibbonGroup title="BIMserver.center" items={serverItems} className="w-[259px] pl-px">
          <button type="button" aria-label="Account" className="flex w-[66px] justify-center pt-0.5">
            {Avatar}
          </button>
        </RibbonGroup>
      </div>
      <div className="flex min-h-0 flex-1">
        <Sidebar />
        <main className="flex min-w-0 flex-1 flex-col">
          <div className="flex h-[25px] shrink-0 items-center bg-[#e9e9e9]">
            {sceneTools.map((group, i) => (
              <div key={group[0].name} className={`flex h-[25px] items-center pr-0.5 ${i > 0 ? "border-l border-[#aaa] pl-[3px]" : ""}`}>
                {group.map((t) => (
                  <button key={t.name} type="button" aria-label={t.name} className="flex w-6 justify-center">{t.icon}</button>
                ))}
              </div>
            ))}
          </div>
          <div className="min-h-0 flex-1 bg-white">
            <Scene />
          </div>
        </main>
      </div>
      <footer className="flex h-[18px] shrink-0 items-center bg-[#e9e9e9] px-[3px]">Design conditions</footer>
      <DesignDialog />
    </div>
  );
}
